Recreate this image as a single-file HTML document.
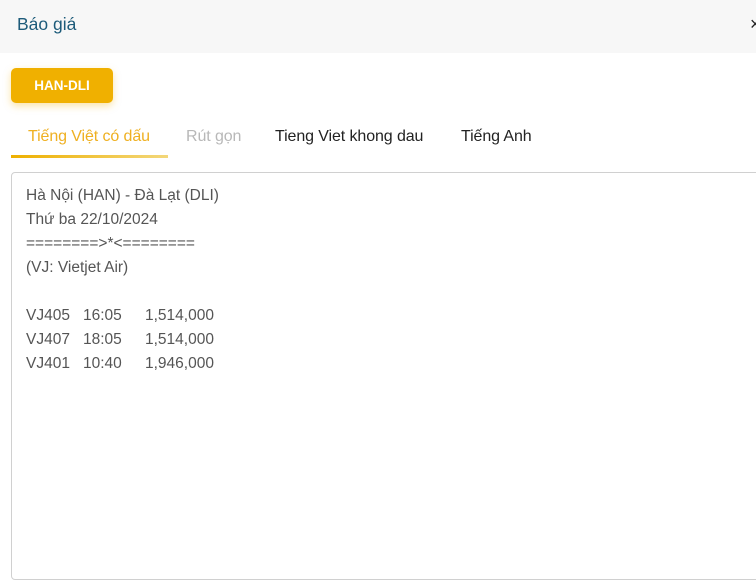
<!DOCTYPE html>
<html><head><meta charset="utf-8"><style>
body{margin:0;width:756px;height:581px;overflow:hidden;background:#fff;font-family:"Liberation Sans",sans-serif;position:relative}
.hd{position:absolute;left:0;top:0;width:756px;height:53px;background:#f7f7f7}
.tt{position:absolute;left:17px;top:14px;font-size:17.5px;color:#1d5b7a}
.x{position:absolute;left:750px;top:14px;font-size:18px;color:#222}
.btn{position:absolute;left:11px;top:68px;width:102px;height:35px;background:#f0b000;border-radius:5px;box-shadow:0 3px 8px rgba(240,176,0,.35);color:#fff;font-weight:bold;font-size:13.5px;line-height:35px;text-align:center}
.tab{position:absolute;top:128px;font-size:16px;color:#222;letter-spacing:-0.1px}
.ul{position:absolute;left:11px;top:155px;width:157px;height:3px;background:linear-gradient(90deg,#eeb000,#f3d77a)}
.box{position:absolute;left:11px;top:172px;width:760px;height:406px;border:1px solid #d0d0d0;border-radius:4px}
.txt{position:absolute;left:26px;top:184px;font-size:15.5px;line-height:24px;color:#555;white-space:pre}
.r{position:absolute;left:26px;font-size:15.5px;line-height:24px;color:#555;white-space:pre}
.r span{position:absolute;top:0}
</style></head><body>
<div class="hd"><div class="tt">Báo giá</div><div class="x">×</div></div>
<div class="btn">HAN-DLI</div>
<div class="tab" style="left:28px;color:#efb021">Tiếng Việt có dấu</div>
<div class="tab" style="left:186px;color:#b8b8b8">Rút gọn</div>
<div class="tab" style="left:275px">Tieng Viet khong dau</div>
<div class="tab" style="left:461px">Tiếng Anh</div>
<div class="ul"></div>
<div class="box"></div>
<div class="txt">Hà Nội (HAN) - Đà Lạt (DLI)
Thứ ba 22/10/2024
========&gt;*&lt;========
(VJ: Vietjet Air)</div>
<div class="r" style="top:304px"><span style="left:0">VJ405</span><span style="left:57px">16:05</span><span style="left:119px">1,514,000</span></div>
<div class="r" style="top:328px"><span style="left:0">VJ407</span><span style="left:57px">18:05</span><span style="left:119px">1,514,000</span></div>
<div class="r" style="top:352px"><span style="left:0">VJ401</span><span style="left:57px">10:40</span><span style="left:119px">1,946,000</span></div>
</body></html>
